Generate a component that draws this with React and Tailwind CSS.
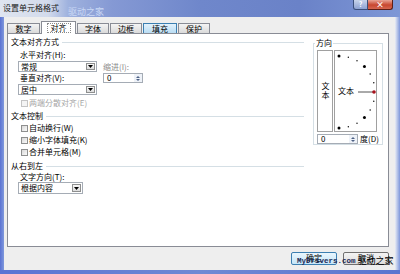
import React from "react";

const tabs = [
  { label: "数字", w: "w-[33px]" },
  { label: "对齐", w: "w-[35px]", active: true },
  { label: "字体", w: "w-[32px]" },
  { label: "边框", w: "w-[32px]" },
  { label: "填充", w: "w-[34px]", hover: true },
  { label: "保护", w: "w-[32px]" },
];

// dial dots, center (4,41) radius 36
const dots = [90, 75, 60, 45, 30, 15, -15, -30, -45, -60, -75, -90].map((a) => {
  const r = (a * Math.PI) / 180;
  return { x: 4 + 36 * Math.cos(r), y: 41 - 36 * Math.sin(r), big: a % 45 === 0 };
});

const Arrow = () => (
  <svg width="5" height="3" viewBox="0 0 5 3">
    <path d="M0 0h5L2.5 3z" fill="#000" />
  </svg>
);

const SpinArrows = () => (
  <div className="w-[8px] flex flex-col justify-center items-center gap-[1px] bg-[#eef2f8]">
    <svg width="4" height="2" viewBox="0 0 4 2">
      <path d="M0 2h4L2 0z" fill="#4d6185" />
    </svg>
    <svg width="4" height="2" viewBox="0 0 4 2">
      <path d="M0 0h4L2 2z" fill="#4d6185" />
    </svg>
  </div>
);

const Select = ({ value, w, h }) => (
  <div className={`${w} ${h} bg-white border border-[#a5acb5] flex items-stretch`}>
    <span className="flex-1 pl-[2px] flex items-center">{value}</span>
    <div className="w-[9px] m-[1px] border border-[#8e8f8f] bg-[linear-gradient(#f7f7f7,#dcdcdc)] flex items-center justify-center">
      <Arrow />
    </div>
  </div>
);

const Spin = ({ w }) => (
  <div className={`${w} h-[10px] bg-white border border-[#a5acb5] flex items-stretch`}>
    <span className="flex-1 pl-[3px] flex items-center">0</span>
    <SpinArrows />
  </div>
);

const Check = ({ label, disabled, className }) => (
  <div className={`flex items-center h-[8px] ${className}`}>
    <div
      className={`w-[7px] h-[7px] border ${
        disabled ? "border-[#c4c4c4] bg-[#f4f4f4]" : "border-[#8e8f8f] bg-[linear-gradient(135deg,#d8d8d8,#fbfbfb)]"
      }`}
    />
    <span className={`ml-[1px] ${disabled ? "text-[#a6a6a6]" : ""}`}>{label}</span>
  </div>
);

const Header = ({ label, className }) => (
  <div className={`flex items-center h-[8px] ${className}`}>
    <span>{label}</span>
    <div className="flex-1 ml-[3px] mr-[1px] h-[1px] bg-[#d5dfe5]" />
  </div>
);

export default function App() {
  return (
    <div className="relative w-[400px] h-[274px] overflow-hidden flex flex-col text-[8px] leading-[8px] text-black font-['Noto_Sans_CJK_SC','Noto_Sans',sans-serif]">
      {/* title bar */}
      <div className="h-[17px] flex items-start bg-[linear-gradient(90deg,#dfe5f0_0%,#d3dbec_12%,#9fb2de_17%,#8599d4_28%,#6f87cb_50%,#6a82c8_75%,#7e97d6_100%)]">
        <span className="ml-[3px] mt-[3px] text-[8px] leading-[9px] text-[#1b1b1b]">设置单元格格式</span>
        <span className="ml-[9px] mt-[7px] text-[9px] leading-[10px] text-[#c9d8f5]">驱动之家</span>
        <div className="ml-auto mr-[7px] flex">
          <div className="w-[15px] h-[10px] border border-[#3b4f7a] border-t-0 rounded-bl-[3px] bg-[linear-gradient(#c7d3ea,#8da2d2)] text-white text-[7px] leading-[9px] font-bold text-center">
            ?
          </div>
          <div className="w-[25px] h-[10px] border border-[#5e1f17] border-t-0 border-l-0 rounded-br-[3px] bg-[linear-gradient(#e9a596,#c8472f_55%,#d5664f)] text-white text-[8px] leading-[9px] font-bold text-center">
            ×
          </div>
        </div>
      </div>

      <div className="flex h-[253px]">
        <div className="w-[4px] bg-[linear-gradient(90deg,#5a72d2,#7f98dc)]" />
        <div className="flex-1 bg-[#eeeeee] flex flex-col pt-[5px] pl-[3px]">
          {/* tabs */}
          <div className="flex items-end h-[11px] gap-[1px]">
            {tabs.map((t) => (
              <div
                key={t.label}
                className={`${t.w} flex items-center justify-center border border-b-0 ${
                  t.active
                    ? "h-[13px] -mb-[1px] relative z-10 bg-white border-[#898c95]"
                    : t.hover
                    ? "h-[10px] bg-[linear-gradient(#e3f2fc,#b9dcf3)] border-[#3c7fb1]"
                    : "h-[10px] bg-[linear-gradient(#f4f4f4,#dadada)] border-[#898c95]"
                }`}
              >
                {t.active ? (
                  <span className="h-[10px] px-[4px] flex items-center outline outline-1 outline-dotted outline-[#8a8a8a] -outline-offset-1">
                    {t.label}
                  </span>
                ) : (
                  t.label
                )}
              </div>
            ))}
          </div>

          {/* panel */}
          <div className="w-[382px] h-[214px] bg-white border border-[#898c95] flex">
            <div className="w-[297px] flex flex-col pl-[3px]">
              <Header label="文本对齐方式" className="mt-[4px]" />
              <div className="pl-[7px] flex">
                <div className="w-[85px] flex flex-col">
                  <span className="ml-[2px] mt-[5px] h-[8px]">水平对齐(H):</span>
                  <div className="mt-[2px]">
                    <Select value="常规" w="w-[79px]" h="h-[11px]" />
                  </div>
                  <span className="ml-[2px] mt-[2px] h-[8px]">垂直对齐(V):</span>
                  <div className="mt-[2px]">
                    <Select value="居中" w="w-[79px]" h="h-[11px]" />
                  </div>
                </div>
                <div className="flex flex-col">
                  <span className="mt-[17px] h-[8px] text-[#8a8a8a]">缩进(I):</span>
                  <div className="mt-[2px]">
                    <Spin w="w-[40px]" />
                  </div>
                </div>
              </div>
              <Check label="两端分散对齐(E)" disabled className="ml-[10px] mt-[4px]" />

              <Header label="文本控制" className="mt-[5px]" />
              <div className="pl-[10px] flex flex-col">
                <Check label="自动换行(W)" className="mt-[4px]" />
                <Check label="缩小字体填充(K)" className="mt-[4px]" />
                <Check label="合并单元格(M)" className="mt-[4px]" />
              </div>

              <Header label="从右到左" className="mt-[6px]" />
              <div className="pl-[7px] flex flex-col">
                <span className="ml-[2px] mt-[3px] h-[8px]">文字方向(T):</span>
                <div className="mt-[1px]">
                  <Select value="根据内容" w="w-[65px]" h="h-[12px]" />
                </div>
              </div>
            </div>

            {/* orientation */}
            <div className="ml-[8px] mt-[9px] w-[70px] h-[102px] border border-[#d5dfe5] flex flex-col">
              <span className="-mt-[5px] ml-[1px] px-[1px] h-[8px] self-start bg-white">方向</span>
              <div className="mt-[3px] ml-[3px] flex">
                <div className="w-[16px] h-[82px] border border-[#a0a0a0] flex items-center justify-center">
                  <span className="[writing-mode:vertical-rl] tracking-[1px] leading-[8px]">文本</span>
                </div>
                <div className="relative ml-[1px] w-[43px] h-[82px] border border-[#a0a0a0] flex items-center pl-[3px]">
                  <span>文本</span>
                  <svg className="absolute left-0 top-0" width="41" height="80" viewBox="0 0 41 80">
                    <line x1="23" y1="41" x2="38" y2="41" stroke="#555" strokeWidth="1" />
                    {dots.map((d, i) => (
                      <circle key={i} cx={d.x} cy={d.y} r={d.big ? 1.5 : 0.7} fill="#000" />
                    ))}
                    <circle cx="39" cy="41" r="1.8" fill="#a8121c" />
                  </svg>
                </div>
              </div>
              <div className="mt-[2px] ml-[3px] flex items-center">
                <div className="w-[41px] h-[10px] bg-white border border-[#a5acb5] flex items-stretch">
                  <span className="flex-1 pl-[3px] flex items-center">0</span>
                  <SpinArrows />
                </div>
                <span className="ml-[2px]">度(D)</span>
              </div>
            </div>
          </div>

          {/* buttons */}
          <div className="flex justify-end gap-[6px] mt-[5px] pr-[6px]">
            <div className="w-[46px] h-[13px] rounded-[2px] border border-[#3c7fb1] bg-[linear-gradient(#eaf6fd,#c4e5f8)] flex items-start justify-center pt-[1px]">
              确定
            </div>
            <div className="w-[46px] h-[13px] rounded-[2px] border border-[#707070] bg-[linear-gradient(#f4f4f4,#dcdcdc)] flex items-start justify-center pt-[1px]">
              取消
            </div>
          </div>
        </div>
        <div className="w-[5px] bg-[linear-gradient(90deg,#e8ecf5,#7d96da)]" />
      </div>
      <div className="h-[4px] bg-[linear-gradient(90deg,#5b73d4,#6f89d4_50%,#5b75d0)]" />

      {/* watermark */}
      <div className="absolute left-[297px] top-[255px] flex items-end">
        <span className="mb-[2px] font-['Liberation_Mono',monospace] font-bold text-[7.5px] leading-[8px] text-[#1d2b57]">
          MyDrivers.com
        </span>
        <span className="ml-[2px] text-[9px] leading-[12px] text-black">驱动之家</span>
      </div>
    </div>
  );
}
